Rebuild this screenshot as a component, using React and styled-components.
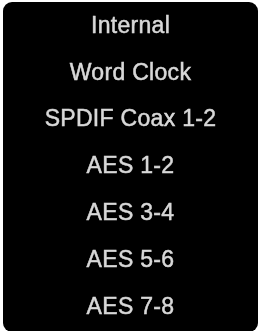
import React from "react";
import styled, { createGlobalStyle } from "styled-components";

const Global = createGlobalStyle`
  html, body { margin: 0; padding: 0; background: #ffffff; }
  body { font-family: "Liberation Sans", Arial, sans-serif; }
`;

const Menu = styled.ul`
  list-style: none;
  margin: 2px 1px 0 3px;
  padding: 0 0 2px;
  width: 255px;
  background: #000000;
  border-radius: 9px;
  display: flex;
  flex-direction: column;
  overflow: hidden;
`;

const Item = styled.li`
  height: 46.8px;
  display: flex;
  align-items: center;
  justify-content: center;
  color: #d8d8d8;
  font-size: 23px;
  letter-spacing: 0.3px;
  font-family: "Liberation Sans", Arial, sans-serif;
  -webkit-text-stroke: 0.5px #d8d8d8;
  filter: blur(0.6px);
  white-space: nowrap;
`;

const items = [
  "Internal",
  "Word Clock",
  "SPDIF Coax 1-2",
  "AES 1-2",
  "AES 3-4",
  "AES 5-6",
  "AES 7-8",
];

export default function App() {
  return (
    <>
      <Global />
      <Menu>
        {items.map((t) => (
          <Item key={t}>{t}</Item>
        ))}
      </Menu>
    </>
  );
}
